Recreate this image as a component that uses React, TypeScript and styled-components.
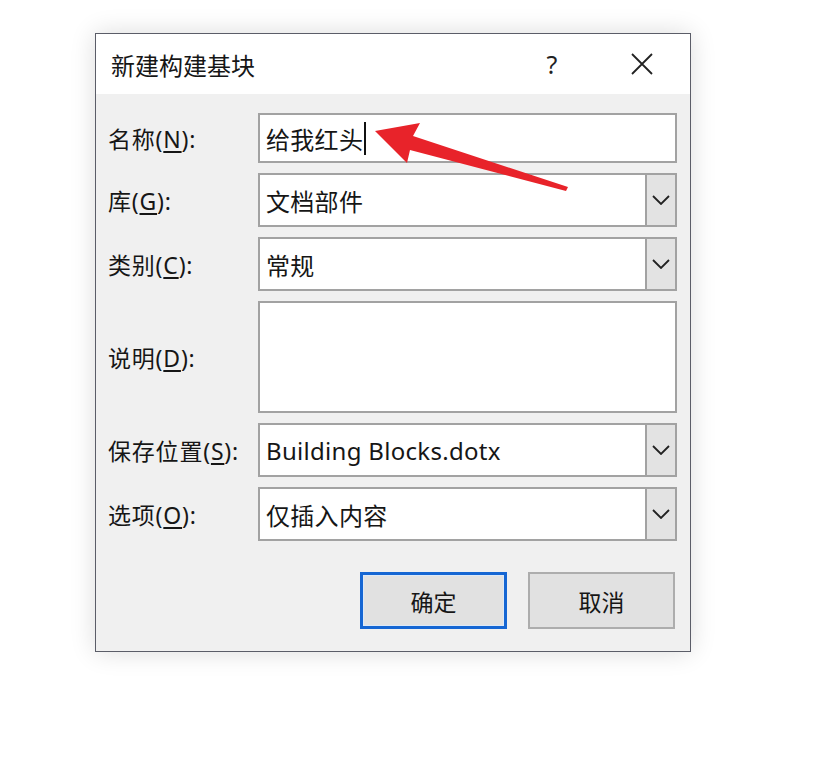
import React from "react";
import styled, { createGlobalStyle } from "styled-components";

const Global = createGlobalStyle`
  html, body {
    margin: 0;
    padding: 0;
    background: #ffffff;
  }
  body {
    font-family: "Noto Sans", "Noto Sans CJK SC", sans-serif;
    color: #161616;
  }
`;

const Page = styled.div`
  position: relative;
  width: 828px;
  height: 774px;
  padding: 33px 0 0 95px;
  box-sizing: border-box;
  overflow: hidden;
`;

const Dialog = styled.div`
  width: 596px;
  height: 619px;
  box-sizing: border-box;
  border: 1.5px solid #5b5d68;
  background: #f0f0f0;
  box-shadow: 0 0 24px rgba(0, 0, 0, 0.14);
  display: flex;
  flex-direction: column;
`;

const TitleBar = styled.div`
  height: 60px;
  background: #ffffff;
  display: flex;
  align-items: center;
  padding: 0 0 0 15px;
`;

const Title = styled.div`
  flex: 1;
  font-size: 24px;
`;

const TitleButton = styled.div<{ $gap?: number }>`
  width: 46px;
  height: 40px;
  display: flex;
  align-items: center;
  justify-content: center;
  font-size: 25px;
  color: #222;
  margin-right: ${(p) => p.$gap ?? 0}px;
`;

const Body = styled.div`
  flex: 1;
  padding: 19px 13px 0 12px;
  display: flex;
  flex-direction: column;
`;

const Form = styled.div`
  display: grid;
  grid-template-columns: 150px 1fr;
  grid-template-rows: 50px 54px 54px 112px 54px 54px;
  row-gap: 10px;
  align-items: center;
`;

const Label = styled.div`
  font-size: 23px;
  letter-spacing: 0.8px;
  white-space: nowrap;
`;

const Key = styled.span`
  text-decoration: underline;
  text-underline-offset: 3px;
  text-decoration-thickness: 1.5px;
`;

const Field = styled.div`
  height: 100%;
  box-sizing: border-box;
  background: #ffffff;
  border: 2px solid #a2a2a2;
  display: flex;
  align-items: center;
`;

const FieldText = styled.div`
  flex: 1;
  padding-left: 6px;
  font-size: 24px;
  letter-spacing: 0.3px;
  display: flex;
  align-items: center;
`;

const Caret = styled.span`
  display: inline-block;
  width: 2px;
  height: 33px;
  background: #111;
  margin-left: 1px;
`;

const DropButton = styled.div`
  width: 32px;
  height: calc(100% + 4px);
  margin: -2px -2px -2px 0;
  box-sizing: border-box;
  border: 2px solid #a2a2a2;
  background: #e3e3e3;
  display: flex;
  align-items: center;
  justify-content: center;
`;

const Buttons = styled.div`
  display: flex;
  justify-content: flex-end;
  gap: 21px;
  margin-top: 31px;
  padding-right: 2px;
`;

const Button = styled.div<{ $primary?: boolean }>`
  width: 147px;
  height: 57px;
  box-sizing: border-box;
  background: #e1e1e1;
  border: ${(p) => (p.$primary ? "3px solid #1566d3" : "2px solid #adadad")};
  box-shadow: ${(p) => (p.$primary ? "inset 0 0 0 1px #dce9f8" : "none")};
  display: flex;
  align-items: center;
  justify-content: center;
  font-size: 23px;
`;

const Annotation = styled.svg`
  position: absolute;
  left: 0;
  top: 0;
  width: 828px;
  height: 774px;
  pointer-events: none;
`;

const Chevron = () => (
  <svg width="18" height="10" viewBox="0 0 18 10">
    <path d="M1 1 L9 9 L17 1" fill="none" stroke="#222" strokeWidth="1.8" />
  </svg>
);

const Select = ({ value }: { value: string }) => (
  <Field>
    <FieldText>{value}</FieldText>
    <DropButton>
      <Chevron />
    </DropButton>
  </Field>
);

export default function App() {
  return (
    <Page>
      <Global />
      <Dialog>
        <TitleBar>
          <Title>新建构建基块</Title>
          <TitleButton $gap={44}>?</TitleButton>
          <TitleButton $gap={25}>
            <svg width="22" height="22" viewBox="0 0 22 22">
              <path d="M1 1 L21 21 M21 1 L1 21" stroke="#222" strokeWidth="1.8" />
            </svg>
          </TitleButton>
        </TitleBar>
        <Body>
          <Form>
            <Label>
              名称(<Key>N</Key>):
            </Label>
            <Field>
              <FieldText>
                给我红头
                <Caret />
              </FieldText>
            </Field>

            <Label>
              库(<Key>G</Key>):
            </Label>
            <Select value="文档部件" />

            <Label>
              类别(<Key>C</Key>):
            </Label>
            <Select value="常规" />

            <Label>
              说明(<Key>D</Key>):
            </Label>
            <Field />

            <Label>
              保存位置(<Key>S</Key>):
            </Label>
            <Select value="Building Blocks.dotx" />

            <Label>
              选项(<Key>O</Key>):
            </Label>
            <Select value="仅插入内容" />
          </Form>
          <Buttons>
            <Button $primary>确定</Button>
            <Button>取消</Button>
          </Buttons>
        </Body>
      </Dialog>
      <Annotation viewBox="0 0 828 774">
        <polygon
          points="375,131 420,123 413,136 568,187 566,191 410,150 407,163"
          fill="#e8232a"
        />
      </Annotation>
    </Page>
  );
}
